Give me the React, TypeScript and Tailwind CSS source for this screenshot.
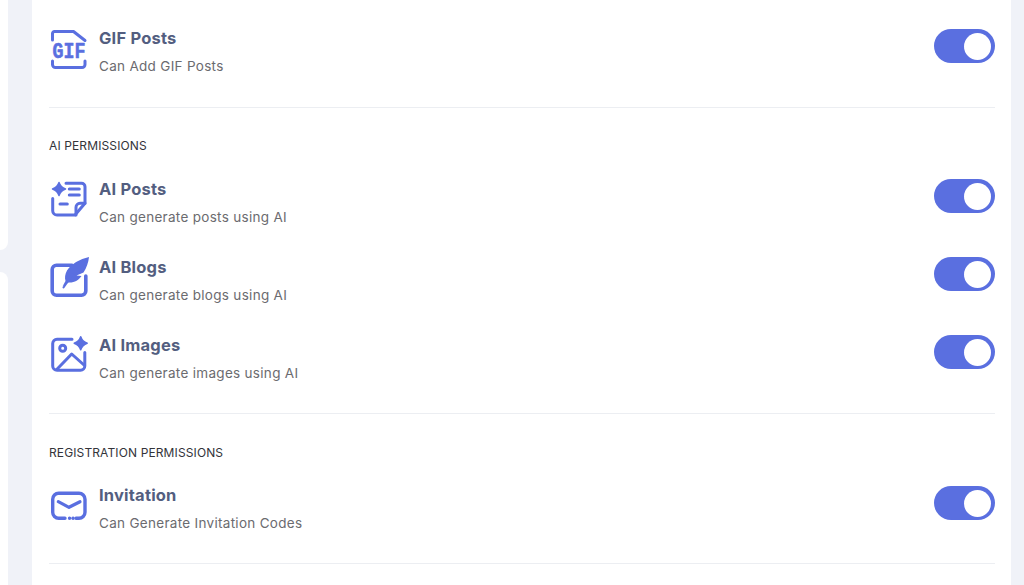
const brand = "#5a6fe0";

function Sparkle({ cx, cy, r }: { cx: number; cy: number; r: number }) {
  const k = r * 0.25;
  return (
    <path
      d={`M${cx} ${cy - r}Q${cx + k} ${cy - k} ${cx + r} ${cy}Q${cx + k} ${cy + k} ${cx} ${cy + r}Q${cx - k} ${cy + k} ${cx - r} ${cy}Q${cx - k} ${cy - k} ${cx} ${cy - r}Z`}
      fill={brand}
      stroke={brand}
      strokeWidth="1.5"
      strokeLinejoin="round"
    />
  );
}

function IconShell({ children }: { children: React.ReactNode }) {
  return (
    <svg
      viewBox="0 0 40 44"
      fill="none"
      stroke={brand}
      strokeWidth="3"
      strokeLinecap="round"
      strokeLinejoin="round"
      className="h-11 w-10 shrink-0 -mt-0.5 overflow-visible"
    >
      {children}
    </svg>
  );
}

function GifIcon() {
  return (
    <IconShell>
      <path d="M3.5 13V6.5a2 2 0 0 1 2-2H24.5L36 13.5" />
      <path d="M3.5 34v3.5a3 3 0 0 0 3 3H33a3 3 0 0 0 3-3V34" />
      <text
        transform="translate(20 31) scale(1 1.2)"
        textAnchor="middle"
        fill={brand}
        stroke={brand}
        strokeWidth="0.5"
        className="font-['Liberation_Mono',monospace] text-[18.3px] font-bold"
      >
        GIF
      </text>
    </IconShell>
  );
}

function PostIcon() {
  return (
    <IconShell>
      <Sparkle cx={10} cy={12} r={6.5} />
      <path d="M17 6.3H32.5a3.5 3.5 0 0 1 3.5 3.5V26.3L26 38H8a4.3 4.3 0 0 1-4.3-4.3V21.5" />
      <path d="M36 26.3H31a4 4 0 0 0-4 4V38" />
      <path d="M20.3 12H30.3M20.3 18H30.3M11 27H18.3" />
    </IconShell>
  );
}

function BlogIcon() {
  return (
    <IconShell>
      <g transform="translate(0 1)">
        <path d="M23 9.3H7.5a4.3 4.3 0 0 0-4.3 4.3V35a4.3 4.3 0 0 0 4.3 4.3H32.5a4.3 4.3 0 0 0 4.3-4.3V20" strokeWidth="3.6" />
        <path d="M40 1C31 3 22 8 18 14.5C16 18 15.5 22 16.5 25L13.5 30.5L19.5 26.5C25 27 30 24 32.5 20L27.5 19.5L34.5 16.5C37.5 12 39.5 6 40 1Z" fill={brand} stroke="none" />
        <path d="M14.5 31.5L24 18" strokeWidth="2" />
      </g>
    </IconShell>
  );
}

function ImageIcon() {
  return (
    <IconShell>
      <path d="M23 6.3H8a4.3 4.3 0 0 0-4.3 4.3V33a4.3 4.3 0 0 0 4.3 4.3H31.5a4.3 4.3 0 0 0 4.3-4.3V19.5" />
      <circle cx="13.7" cy="15.3" r="3" />
      <path d="M7.7 36.5L22.7 21L35 32" />
      <Sparkle cx={31.7} cy={10.3} r={6.5} />
    </IconShell>
  );
}

function MailIcon() {
  return (
    <IconShell>
      <path d="M16 34.3H9.7a6 6 0 0 1-6-6V15.3a6 6 0 0 1 6-6H30a6 6 0 0 1 6 6V28.3a6 6 0 0 1-6 6H27" strokeWidth="3.4" />
      <path d="M9.3 17.700L20 23.3L31 17.700" strokeWidth="3.2" />
      <path d="M20.5 34.3H20.6M24 34.3H24.1" strokeWidth="3.4" />
    </IconShell>
  );
}

function Toggle() {
  return (
    <div className="flex h-[34px] w-[61px] items-center justify-end rounded-full bg-[#5a6fe0] pr-1 shrink-0">
      <div className="size-[27px] rounded-full bg-white" />
    </div>
  );
}

function PermissionRow({
  icon,
  title,
  sub,
  textClass = "",
}: {
  icon: React.ReactNode;
  title: string;
  sub: string;
  textClass?: string;
}) {
  return (
    <div className="flex h-[78px] items-start">
      <div className="w-[50px] shrink-0">{icon}</div>
      <div className={`flex-1 ${textClass}`}>
        <div className="text-[16.5px] leading-[18px] font-bold tracking-[0.2px] text-[#535e80]">{title}</div>
        <div className="mt-[10px] text-[13.5px] leading-[18px] tracking-[0.3px] text-[#6b6b6f]">{sub}</div>
      </div>
      <Toggle />
    </div>
  );
}

function SectionLabel({ children }: { children: React.ReactNode }) {
  return <div className="text-[12px] leading-[16px] tracking-[0.12px] text-[#33343a]">{children}</div>;
}

export default function App() {
  return (
    <div className="flex h-[585px] w-[1024px] overflow-hidden bg-[#f0f2f8] font-['Inter',sans-serif]">
      {/* sidebar cards peeking in from the left */}
      <div className="flex w-2 shrink-0 flex-col gap-[22px]">
        <div className="h-[250px] rounded-br-lg bg-white" />
        <div className="flex-1 rounded-tr-lg bg-white" />
      </div>

      <div className="ml-6 w-[979px] shrink-0 bg-white pl-[17px] pr-4 pt-[29px]">
        <PermissionRow icon={<GifIcon />} title="GIF Posts" sub="Can Add GIF Posts" />
        <div className="h-px bg-[#eceef2]" />

        <div className="mt-[30px] mb-[25px]">
          <SectionLabel>AI PERMISSIONS</SectionLabel>
        </div>
        <PermissionRow icon={<PostIcon />} textClass="pt-px" title="AI Posts" sub="Can generate posts using AI" />
        <PermissionRow icon={<BlogIcon />} textClass="pt-px" title="AI Blogs" sub="Can generate blogs using AI" />
        <PermissionRow icon={<ImageIcon />} textClass="pt-px" title="AI Images" sub="Can generate images using AI" />
        <div className="h-px bg-[#eceef2]" />

        <div className="mt-[31px] mb-[25px]">
          <SectionLabel>REGISTRATION PERMISSIONS</SectionLabel>
        </div>
        <PermissionRow icon={<MailIcon />} title="Invitation" sub="Can Generate Invitation Codes" />
        <div className="-mt-px h-px bg-[#eceef2]" />
      </div>
    </div>
  );
}
